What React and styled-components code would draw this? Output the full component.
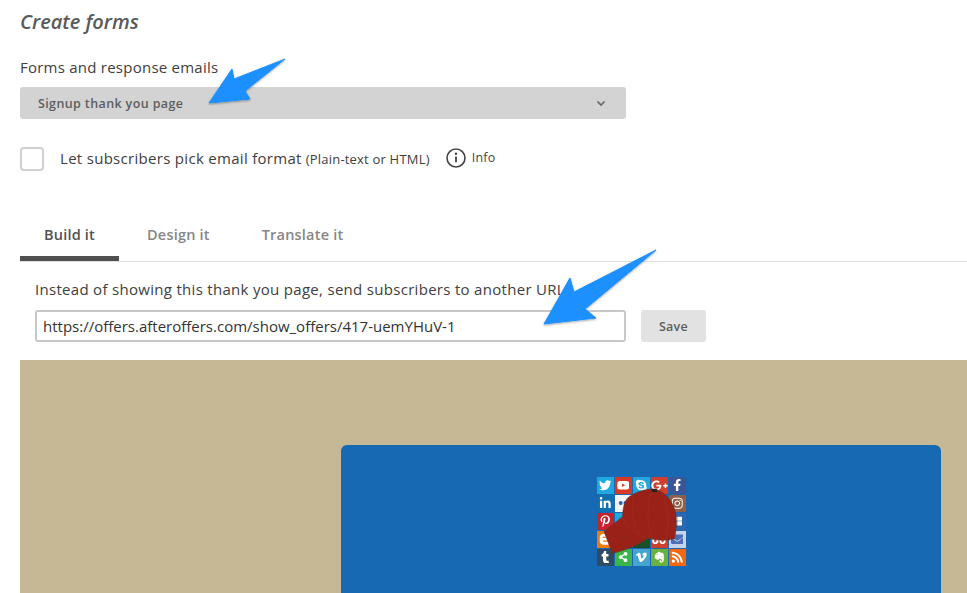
import React from 'react';
import styled, { createGlobalStyle } from 'styled-components';
import {
  FaTwitter, FaYoutube, FaSkype, FaGooglePlusG, FaFacebookF, FaLinkedinIn, FaInstagram,
  FaPinterestP, FaBloggerB, FaTumblr, FaShareAlt, FaVimeoV, FaEvernote, FaRss, FaEnvelope, FaThLarge
} from 'react-icons/fa';

const GlobalStyle = createGlobalStyle`
  html, body {
    margin: 0;
    padding: 0;
    background: #fff;
  }
  body {
    font-family: "Open Sans", "Liberation Sans", sans-serif;
    color: #404040;
  }
`;

const Page = styled.div`
  position: relative;
  width: 967px;
  height: 593px;
  overflow: hidden;
  box-sizing: border-box;
  padding-top: 8px;
`;

const Title = styled.h1`
  margin: 0 0 0 20px;
  font-size: 20px;
  line-height: 28px;
  font-style: italic;
  font-weight: 600;
  color: #5a5a5a;
`;

const FieldLabel = styled.div`
  margin: 21px 0 0 20px;
  font-size: 15px;
  line-height: 20px;
  font-weight: 500;
  letter-spacing: 0.24px;
  color: #404040;
`;

const Select = styled.div`
  margin: 10px 0 0 20px;
  width: 606px;
  height: 32px;
  box-sizing: border-box;
  padding: 0 20px 0 18px;
  display: flex;
  align-items: center;
  justify-content: space-between;
  background: #d3d3d3;
  border-radius: 3px;
  font-size: 12.5px;
  font-weight: 600;
  letter-spacing: 0.38px;
  color: #5e5e5e;
`;

const CheckRow = styled.div`
  margin: 28px 0 0 20px;
  height: 24px;
  display: flex;
  align-items: center;
`;

const CheckBox = styled.span`
  width: 24px;
  height: 24px;
  box-sizing: border-box;
  border: 2px solid #d0d0d0;
  border-radius: 4px;
  background: #fff;
`;

const CheckLabel = styled.span`
  margin: -3px 0 0 16px;
  font-size: 15px;
  font-weight: 500;
  letter-spacing: 0.3px;
  color: #404040;
`;

const CheckHint = styled.span`
  margin-left: 4px;
  font-size: 13px;
  font-weight: 500;
  letter-spacing: 0.2px;
`;

const InfoLink = styled.span`
  margin: -3px 0 0 16px;
  display: flex;
  align-items: center;
  gap: 6px;
  font-size: 12.5px;
  font-weight: 500;
  letter-spacing: 0.2px;
  color: #444;
`;

const Tabs = styled.div`
  margin: 38px 0 0 20px;
  height: 52px;
  display: flex;
  border-bottom: 1px solid #e0e0e0;
`;

const Tab = styled.div`
  box-sizing: border-box;
  padding: 0 24px;
  height: 52px;
  margin-right: 4px;
  line-height: 52px;
  font-size: 14.5px;
  font-weight: 600;
  letter-spacing: 0.2px;
  color: ${p => (p.$active ? '#525252' : '#868686')};
  border-bottom: 5px solid ${p => (p.$active ? '#4f4f4f' : 'transparent')};
`;

const RedirectLabel = styled.div`
  margin: 17px 0 0 35px;
  font-size: 15px;
  line-height: 20px;
  font-weight: 500;
  letter-spacing: 0.3px;
  color: #404040;
`;

const RedirectRow = styled.div`
  margin: 11px 0 0 35px;
  display: flex;
  gap: 15px;
`;

const UrlInput = styled.div`
  width: 591px;
  height: 32px;
  box-sizing: border-box;
  padding: 0 6px;
  display: flex;
  align-items: center;
  border: 2px solid #c8c8c8;
  border-radius: 3px;
  font-size: 15px;
  color: #333;
  background: #fff;
`;

const SaveButton = styled.div`
  width: 65px;
  height: 32px;
  display: flex;
  align-items: center;
  justify-content: center;
  background: #e2e2e2;
  border-radius: 3px;
  font-size: 12.5px;
  font-weight: 600;
  letter-spacing: 0.3px;
  color: #5e5e5e;
`;

const Preview = styled.div`
  margin: 18px 0 0 20px;
  height: 233px;
  box-sizing: border-box;
  padding: 85px 26px 0 321px;
  background: #c6b895;
`;

const Card = styled.div`
  height: 200px;
  padding-top: 31px;
  display: flex;
  justify-content: center;
  background: #1769b3;
  border-radius: 6px 6px 0 0;
`;

const IconBlock = styled.div`
  position: relative;
  width: 90px;
  height: 90px;
  display: grid;
  grid-template-columns: repeat(5, 18px);
  grid-template-rows: repeat(5, 18px);
`;

const Tile = styled.div`
  display: flex;
  align-items: center;
  justify-content: center;
  margin: 0.5px;
  font-size: 12.5px;
  font-weight: 700;
  background: ${p => p.$bg};
  color: ${p => p.$fg || '#fff'};
`;

const Hat = styled.svg`
  position: absolute;
  left: -7px;
  top: -6px;
  width: 105px;
  height: 100px;
`;

const Arrows = styled.svg`
  position: absolute;
  left: 0;
  top: 0;
  width: 967px;
  height: 593px;
  pointer-events: none;
`;

const tiles = [
  { bg: '#1da9e0', icon: <FaTwitter /> },
  { bg: '#d63a26', icon: <FaYoutube /> },
  { bg: '#28a4dc', icon: <FaSkype /> },
  { bg: '#cf3f2c', icon: <FaGooglePlusG size={17} /> },
  { bg: '#3b5596', icon: <FaFacebookF /> },
  { bg: '#0f6fb0', icon: <FaLinkedinIn /> },
  { bg: '#f4f4f4', fg: '#2c5fb3', text: '••' },
  { bg: '#1a9ad6' },
  { bg: '#3c5a99' },
  { bg: '#8f5f48', icon: <FaInstagram /> },
  { bg: '#c8232c', icon: <FaPinterestP /> },
  { bg: '#1da9e0' },
  { bg: '#222' },
  { bg: '#333' },
  { bg: '#2f66b0', icon: <FaThLarge size={10} /> },
  { bg: '#ef7a10', icon: <FaBloggerB /> },
  { bg: '#0f5f3a' },
  { bg: '#1a4f2a' },
  { bg: '#cf3f2c', text: '00' },
  { bg: '#c7d3e8', fg: '#4a6fb5', icon: <FaEnvelope /> },
  { bg: '#2f4a63', icon: <FaTumblr /> },
  { bg: '#39b54a', icon: <FaShareAlt size={10} /> },
  { bg: '#45a5d0', icon: <FaVimeoV /> },
  { bg: '#6ab23e', icon: <FaEvernote /> },
  { bg: '#f4660f', icon: <FaRss /> }
];

const InfoIcon = () => (
  <svg width="20" height="20" viewBox="0 0 20 20" fill="none">
    <circle cx="10" cy="10" r="9" stroke="#444" strokeWidth="1.6" />
    <circle cx="10" cy="5.8" r="1.2" fill="#444" />
    <path d="M10 8.6v5.6" stroke="#444" strokeWidth="1.8" />
  </svg>
);

const Chevron = () => (
  <svg width="10" height="7" viewBox="0 0 10 7" fill="none">
    <path d="M1.5 1.5L5 5l3.5-3.5" stroke="#666" strokeWidth="1.7" />
  </svg>
);

const App = () => (
  <Page>
    <GlobalStyle />
    <Title>Create forms</Title>
    <FieldLabel>Forms and response emails</FieldLabel>
    <Select>
      Signup thank you page
      <Chevron />
    </Select>
    <CheckRow>
      <CheckBox />
      <CheckLabel>
        Let subscribers pick email format
        <CheckHint>(Plain-text or HTML)</CheckHint>
      </CheckLabel>
      <InfoLink>
        <InfoIcon />
        Info
      </InfoLink>
    </CheckRow>
    <Tabs>
      <Tab $active>Build it</Tab>
      <Tab>Design it</Tab>
      <Tab>Translate it</Tab>
    </Tabs>
    <RedirectLabel>Instead of showing this thank you page, send subscribers to another URL</RedirectLabel>
    <RedirectRow>
      <UrlInput>https://offers.afteroffers.com/show_offers/417-uemYHuV-1</UrlInput>
      <SaveButton>Save</SaveButton>
    </RedirectRow>
    <Preview>
      <Card>
        <IconBlock>
          {tiles.map((t, i) => (
            <Tile key={i} $bg={t.bg} $fg={t.fg}>
              {t.icon || t.text}
            </Tile>
          ))}
          <Hat viewBox="0 0 315 300">
            <path
              d="M100 140C102 112 106 92 120 80C145 64 172 56 197 57C228 64 248 92 257 118C264 140 264 178 256 207C225 213 200 211 175 205C155 222 110 242 70 250L45 185Z"
              fill="#9a2118"
              stroke="#4a3a30"
              strokeWidth="1.5"
            />
            <path d="M100 140C115 175 145 195 175 205M190 60C170 110 175 170 190 208M135 80C125 130 135 170 150 192M225 85C240 130 240 170 228 210" fill="none" stroke="#a8392c" strokeWidth="1" />
            <rect x="188" y="57" width="16" height="9" fill="#222" />
          </Hat>
        </IconBlock>
      </Card>
    </Preview>
    <Arrows viewBox="0 0 967 593">
      <defs>
        <filter id="arrowShadow" x="-20%" y="-20%" width="140%" height="140%">
          <feDropShadow dx="0" dy="1" stdDeviation="1" floodColor="#000" floodOpacity="0.35" />
        </filter>
      </defs>
      <g fill="#1e90ff" stroke="#1e90ff" strokeWidth="1" strokeLinejoin="round" filter="url(#arrowShadow)">
        <path d="M209 103L232 69L234 79L285 59L245 91L250 99Z" />
        <path d="M544 324L570 278L574 292L656 250L585 309L596 318Z" />
      </g>
    </Arrows>
  </Page>
);

export default App;
